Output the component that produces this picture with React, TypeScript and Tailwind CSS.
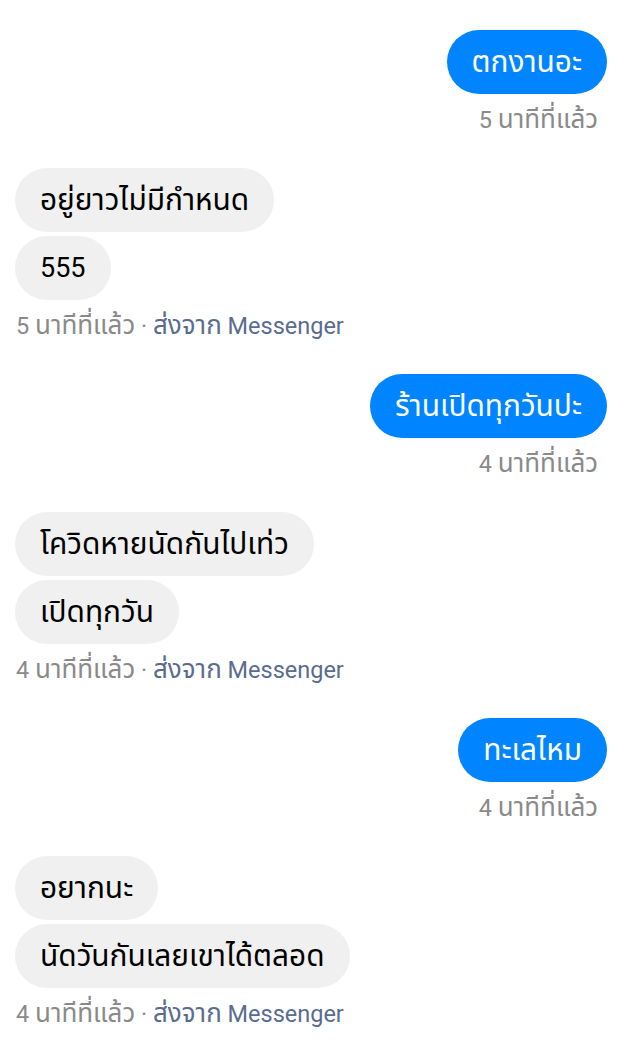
import React from 'react';

type Group = {
  mine: boolean;
  texts: string[];
  time: string;
};

const groups: Group[] = [
  { mine: true, texts: ['ตกงานอะ'], time: '5 นาทีที่แล้ว' },
  { mine: false, texts: ['อยู่ยาวไม่มีกำหนด', '555'], time: '5 นาทีที่แล้ว' },
  { mine: true, texts: ['ร้านเปิดทุกวันปะ'], time: '4 นาทีที่แล้ว' },
  { mine: false, texts: ['โควิดหายนัดกันไปเท่ว', 'เปิดทุกวัน'], time: '4 นาทีที่แล้ว' },
  { mine: true, texts: ['ทะเลไหม'], time: '4 นาทีที่แล้ว' },
  { mine: false, texts: ['อยากนะ', 'นัดวันกันเลยเขาได้ตลอด'], time: '4 นาทีที่แล้ว' },
];

// the thai fallback font runs a bit small next to Roboto, bump it up
function Txt({ children }: { children: string }) {
  const parts = children.split(/([\u0E00-\u0E7F]+)/).filter(Boolean);
  return (
    <>
      {parts.map((p, i) =>
        /[\u0E00-\u0E7F]/.test(p) ? (
          <span key={i} className="text-[1.105em]">
            {p}
          </span>
        ) : (
          <React.Fragment key={i}>{p}</React.Fragment>
        )
      )}
    </>
  );
}

function MessageGroup({ group }: { group: Group }) {
  const { mine, texts, time } = group;
  return (
    <div className={`flex flex-col gap-[4px] ${mine ? 'items-end' : 'items-start'}`}>
      {texts.map((t, i) => (
        <div
          key={i}
          className={`h-[64px] px-[25px] flex items-center rounded-full text-[27px] leading-[40px] whitespace-nowrap ${
            mine ? 'bg-[#0084ff] text-white' : 'bg-[#f0f0f0] text-black'
          }`}
        >
          <span>
            <Txt>{t}</Txt>
          </span>
        </div>
      ))}
      <div
        className={`mt-[6px] h-[30px] flex items-center whitespace-nowrap text-[23.5px] text-[#8a8a8a] ${
          mine ? 'pr-[9px]' : 'pl-[1px]'
        }`}
      >
        <span>
          <Txt>{time}</Txt>
          {!mine && (
            <>
              <span> · </span>
              <span className="text-[#5a6d8f]">
                <Txt>ส่งจาก Messenger</Txt>
              </span>
            </>
          )}
        </span>
      </div>
    </div>
  );
}

export default function App() {
  return (
    <div
      className="min-h-screen bg-white pt-[30px] pl-[15px] pr-[12px] flex flex-col gap-[34px]"
      style={{ fontFamily: "Roboto, 'Noto Sans', 'Noto Sans Thai', sans-serif" }}
    >
      {groups.map((g, i) => (
        <MessageGroup key={i} group={g} />
      ))}
    </div>
  );
}
